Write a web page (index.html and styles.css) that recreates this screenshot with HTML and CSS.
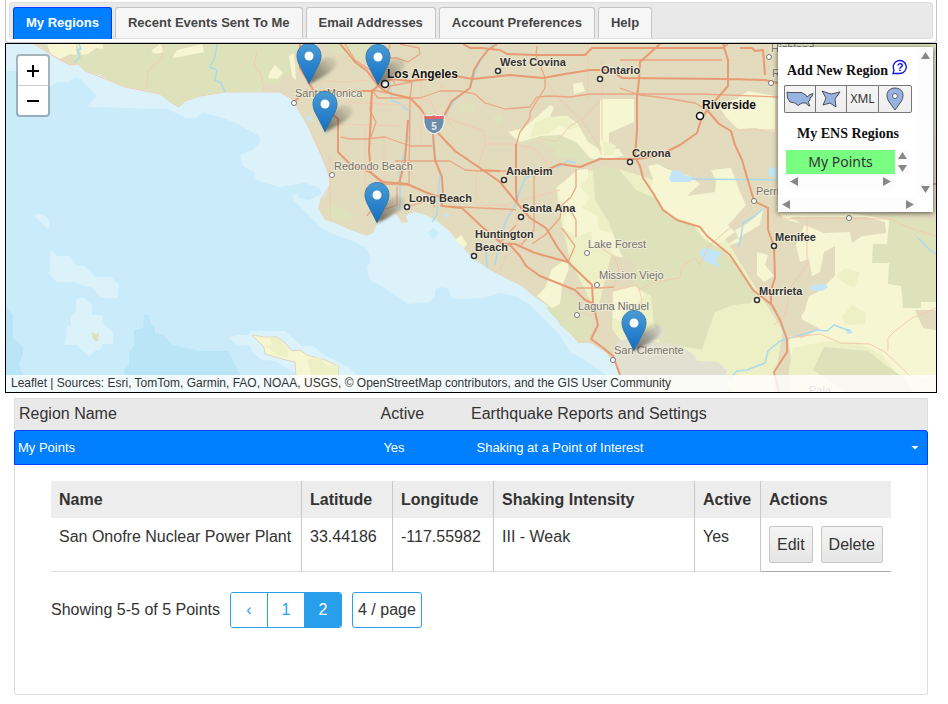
FILE: index.html
```html
<!DOCTYPE html>
<html lang="en">
<head>
<meta charset="utf-8">
<meta name="viewport" content="width=device-width, initial-scale=1">
<title>My Regions</title>
<link rel="stylesheet" href="styles.css">
</head>
<body>
<header class="tabs-frame">
  <nav class="tabs" aria-label="Account sections">
    <a class="tab tab-active" href="#regions">My Regions</a>
    <a class="tab" href="#events">Recent Events Sent To Me</a>
    <a class="tab" href="#emails">Email Addresses</a>
    <a class="tab" href="#preferences">Account Preferences</a>
    <a class="tab" href="#help">Help</a>
  </nav>
</header>

<main id="regions">
<section class="map" aria-label="Map of regions">
  <svg class="map-canvas" viewBox="6 44 930 348" preserveAspectRatio="xMidYMid slice" role="img" aria-label="Southern California">
    <defs>
      <linearGradient id="pinFill" x1="0" y1="0" x2="0" y2="1">
        <stop offset="0" stop-color="#4a9bd3"/><stop offset="1" stop-color="#126fc6"/>
      </linearGradient>
      <linearGradient id="pinEdge" x1="0" y1="0" x2="0" y2="1">
        <stop offset="0" stop-color="#3883b7"/><stop offset="1" stop-color="#2e6c97"/>
      </linearGradient>
      <linearGradient id="pinShadow" x1="0" y1="1" x2="1" y2="0">
        <stop offset="0" stop-color="#222" stop-opacity=".65"/><stop offset="1" stop-color="#222" stop-opacity="0"/>
      </linearGradient>
      <filter id="soft" x="-30%" y="-30%" width="160%" height="160%"><feGaussianBlur stdDeviation="1.6"/></filter>
      <g id="pin">
        <path d="M0 0C2-10 8-25 20-27C29-29 30-20 22-13C15-7 5-2 0 0z" fill="url(#pinShadow)" filter="url(#soft)"/>
        <path d="M0-.5L-9.5-19C-11-22-12-25-12-28C-12-35-7-40.500 0-40.500S12-35 12-28C12-25 11-22 9.500-19z" fill="url(#pinFill)" stroke="url(#pinEdge)"/>
        <circle cx="0" cy="-28" r="4.500" fill="#fff"/>
      </g>
    </defs>

    <rect x="6" y="44" width="930" height="348" fill="#dcf2fb"/>
    <path class="sea" d="M6 71H17L20 78L50 87L58 82L68 82L75 77L82 80L85 84L97 95L87 107L168 109L185 118H195L203 113L223 118L233 122L243 127L259 136L260 142L253 150L240 155L243 166L254 172L256 180L280 187L305 183L313 186V191L293 195V200L310 217L320 227L335 235L350 240L365 247L370 255V262L367 267L368 275L372 282L380 285L395 295L408 304L430 302L435 296V289L443 287L448 289L451 297L455 299L483 298L500 293L515 296L530 305L545 320L560 335L570 352L585 360L607 375L600 392H6z"/>
    <path class="deep" d="M6 307L13 315V338L23 347V355L18 363L23 375L18 392H6zM144 315H149L151 324L155 326V333L163 335L173 345L200 351H228L233 361L240 375V392H128L124 370L129 365V353L134 346V330L143 328z"/>
    <path class="shoal" d="M34 216L37 214H43L50 221L48 229zM51 250L57 256H70L77 266H85L95 277H111L119 285L118 298H101L92 287L84 286L74 282H57L49 274zM76 300L80 298H85L92 305V315H102L104 324L113 332V344H103L100 350L95 351L89 356L77 345H65L67 327L71 325V316L76 312zM292 196L305 191L340 190V235L320 227z"/>
    <path class="sea" d="M428 232L434 228L439 233L433 240zM303 183L319 187L322 193L310 200L298 198z"/>
    <path class="shoal" d="M229 338L235 335H248L251 331H285L302 346H313L325 355L350 368L362 380L370 392H300L295 373L275 361L262 360L252 352L250 346L238 345z"/>

    <path fill="#e2dbbd" d="M34 44L42 48L55 57L70 65L78 64L85 71L100 75L113 82L125 87L146 90L160 94L172 103L179 107L185 101L200 96L225 92L262 91L280 92L292 99L300 112L307 124L315 142L322 157L329 175L330 185L325 196L320 201L318 208L325 220L335 223L348 229L367 236L373 233L378 222L385 220L395 213L402 223L408 222L406 215L415 212L425 215L436 220L450 232L465 250L475 260L490 270L505 278L520 285L535 297L551 308L560 325L570 333L578 343H590L605 352L615 364L622 376L632 392H936V44z"/>
    <path fill="none" stroke="#f3ccb1" d="M34 44L55 57L70 65L78 64L85 71L113 82L125 87L160 94L172 103L179 107L185 101L200 96L225 92L280 92L292 99L307 124L322 157L329 175L330 185L320 201"/>

    <path class="park" d="M70 44L73 59L78 64L85 71L100 75L113 82L125 87L146 90L160 94L172 103L179 107L185 101L200 96L225 92L262 91L266 83L278 84L284 76L299 71L294 54L301 44zM328 44L333 52L345 54L352 62L362 60L367 50L375 44zM323 211L333 204L349 211L354 221L339 221zM780 44H936V130H933V47H780zM460 104L474 103L476 109L467 114L458 110zM493 117L500 114L503 121L496 124z"/>
    <path class="meadow" d="M47 44L51 54L60 59L70 54L77 55L76 44zM77 44L82 55L88 54L96 48L103 49V44zM151 51L160 44L165 52L156 54zM172 58L177 50L202 44L204 52L189 55L179 57zM270 72L275 65L283 73L278 79L268 78zM289 56L294 53L296 80L292 76z"/>
    <path class="park" d="M515 134L523 131L535 120H548L558 128L577 129L592 140L598 145L620 149L615 157L581 164L573 158H558L553 148L540 140L520 143z"/>
    <path class="meadow" d="M508 132L524 128L538 116L550 105L554 107L550 117L567 116L578 124L588 142L602 151L618 149L624 156L600 160L590 158L576 142L560 135L540 136L520 142zM600 99H634V122L609 133V149H620V152L603 154L600 143zM573 84L582 82L585 91L574 94zM724 102L737 99L748 91L775 96V132L755 128L738 129L725 116L720 108z"/>
    <path class="field" d="M535 122L549 117L568 118L578 126L570 130L560 126L548 134L530 137zM603 141L616 145L614 154L604 156zM556 187L578 172L615 168L680 188L720 230L757 290L783 330L773 392H660L590 300L570 260L559 210z"/>
    <path class="meadow" d="M558 187L577 170L588 169V178L580 186L590 198L582 208L597 216L599 230L625 235L628 256L619 258L608 247L593 246L591 231L577 237L562 228L568 208L559 198zM648 166L658 164L667 169L690 176L700 184L687 196L715 192L716 181L711 170L731 168L740 192L746 205L728 225L735 232L716 246L702 236L696 227L676 220L663 207L650 190L653 179zM610 290L635 285L645 295L630 310L635 325L612 318z"/>
    <path class="park" d="M593 170L603 166L618 168L636 190L655 198L667 215L694 226L704 239L722 250L740 268L757 294L750 303L733 305L715 312L705 340L702 350L660 342L654 325L651 296L634 286L635 270L621 254L608 221L595 200zM546 308L557 302L565 292L577 299L583 315L593 318L590 340H578L566 330z"/>
    <path class="meadow" d="M537 296L545 288L552 269L566 259L569 269L562 286L560 304L552 308zM455 240L461 235L467 244L464 248z"/>
    <path fill="#f7f6d3" d="M776 206L793 212L850 213L880 218L936 230V392H795L792 364L788 336L805 310L813 281L809 259L800 262L796 245L805 224L783 219zM731 242L745 234L760 225L764 206L755 217L745 225L735 230L740 242L726 246zM757 252L768 255L765 265L774 276L764 282L757 275z"/>
    <path fill="#e2dbbd" d="M790 217H866L885 222L886 233L862 236L852 243L850 232L824 233L802 224zM788 336L798 307L805 280L820 272L824 252L835 246V276L818 292L795 303L803 320L820 329L802 338zM915 310H936V330L923 328z"/>
    <path class="park" d="M890 213L905 220H936V302H921V308H903L901 286L888 284L889 263H872L873 244H887z"/>
    <path class="field" d="M789 369L793 348L821 342H857L882 355L897 374L936 380V392H789zM835 276L846 268L860 273L855 287L847 285zM842 317L852 305L866 313L865 324L845 325z"/>
    <path fill="#dee2ba" d="M813 370L824 347L868 351L884 364L903 377L914 392H845z"/>
    <path fill="#e2e0d0" d="M612 350L618 341L640 336L654 328L664 326V337L652 341L680 345L695 356L697 361L718 362L727 371L723 380L733 392H631L622 376z"/>
    <path fill="#e2dbbd" d="M611 256L630 258L635 267L634 286L613 292L612 334L602 338L596 312L600 300z"/>
    <path fill="#f7f6d3" stroke="#dcd8bc" d="M252 335L264 337H277L285 343L292 351L300 350L307 355L325 360L338 366L340 392H297L295 362L286 360L265 354L264 347z"/>
    <path class="field" d="M270 338H278L289 350L287 358L276 354L265 346L272 344zM307 359L319 357L327 365H338V375H311z"/>
    <path fill="#dee2ba" d="M92 332L96 334L99 332L98 341H95L92 337z"/>
    <path class="lake" d="M669 178L672 171L678 170L685 175L695 178L690 182L671 182zM699 254L704 247L722 253L716 260L721 268L704 261zM767 170L776 166V178L770 176zM811 285L825 284L828 287L822 291L811 290zM845 329H850L853 333L848 334zM443 213L451 215L447 218zM307 117L312 115L311 122L307 120z"/>
    <path class="river" d="M79 44L81 49L77 50L80 57L75 62M217 44L215 57L210 67L217 70L215 80L221 83L225 92M492 44L482 58L476 70L470 88L456 99L448 110L446 116M390 82L392 101L399 103L410 112L409 135L400 170V211M434 134L433 148L440 175L437 215L432 222M557 168L568 161L576 163M595 161L600 158L605 159M536 173L525 178L515 205L506 221L500 240L495 265M486 250L487 268M692 179L776 180M764 208L755 216L743 223L741 237L738 247M729 379L737 371L747 370L765 363L768 351L780 341L794 337L817 330L827 331L834 325L850 331M917 237L930 250L936 254M781 325L787 340"/>
    <path class="minor" d="M164 44L162 58L148 71L146 90M257 51L254 65L261 74L264 91M300 96L325 81L345 82L370 80M343 60L354 53M325 124L378 125L400 126M330 155V220M345 102L420 106M384 136V205M421 72V143M365 124L365 194M380 92L430 100L437 115L452 120L484 131L485 144H513L535 149L548 164M485 144L476 175V206L505 205L560 190M440 84L450 95L447 120L456 130M545 80L560 100L580 118L594 138L602 155M602 98L584 118L570 126L557 141L540 139M588 44V100M602 60V140M620 60H735M738 130H780M770 209L785 219L820 218L890 219L910 228L936 236M807 220V265L790 288L785 315L774 325M787 338L820 334L840 343L870 344L885 352L910 376M888 351V338L895 331L912 318L936 308M598 246L615 257L619 270L614 287M612 290L638 285L642 300L637 315M638 290L655 282L680 278L682 266L695 258L700 265L708 247L750 210M500 270L505 257L520 246L517 220L505 205"/>
    <path class="road" d="M341 137L350 139H365L385 137L410 146H432M371 137L376 122L370 110L372 92M395 161H450L465 170L480 171H515M384 184L409 185L410 98L412 82L390 86L387 93L372 90L378 98H420L440 91H460L475 94L485 103L505 109L530 107L537 97L550 96L570 97L590 94H700L778 97M384 58L397 58L408 62L420 54L419 48L400 44M345 44L355 60L370 70L375 82M390 44L385 66L395 84M537 46L536 55L541 67L545 78V88L535 104L530 112V118L520 132L516 145V190M516 210L505 209L480 208L440 206M534 175V230L521 245M576 169V187L571 197L562 205L560 218L545 235L532 244M571 211L576 220V237M620 88L640 95L665 98L695 103L707 110M620 60H722M576 288L600 288L614 287M367 216L370 212L380 211L397 205V187M410 206L430 200L435 207M500 243L516 225M568 262L575 246L562 228"/>
    <path class="highway" d="M463 44L470 48H482L500 50L507 54L535 55H585L592 48H722L728 44M740 48H752L755 51L763 50L765 75M293 103L300 96L307 91H372L378 86L392 79L410 81L455 76L473 79L510 75L543 78L565 74L590 70L610 70L622 78L728 79L765 80L778 83M340 44L347 52L355 62L367 71L376 83L383 90L392 94L410 98L420 108L437 132L455 151L480 168L500 182L517 203L530 218L546 228L558 248L570 264L592 285L593 303L598 325L591 339L602 347L613 356L620 375M300 44L300 68L312 88L322 106L338 119V152L350 164L370 172L383 182L407 184L430 194L441 197L442 206L462 208L480 225L500 242L510 245L520 256L526 266L540 276L560 284L575 290L585 300L592 303M433 134L435 160L442 177L443 195M444 116L452 101L470 88L474 70L480 60L488 50L497 44M372 90L371 115L369 150L371 173L384 184M408 120L405 160L399 184M500 243L515 244L535 253L568 262M660 44L640 62L639 80L637 97V130L635 157L640 166L643 178L653 193L663 210L677 220L700 227L707 236L730 255L738 267L753 290L772 305L780 320L787 339V352L774 372L779 392M540 173L560 164L580 167L600 159H635L645 158L660 155L680 145L697 133L701 120L707 110L728 86L728 60L723 44M707 110L719 124L731 131L735 145L742 160L754 201L768 208V230L774 246L775 278L771 290V305M480 170L500 171M516 144V190L517 203M936 184H930"/>

    <g class="town-small">
      <text x="295" y="97">Santa Monica</text><text x="334" y="170">Redondo Beach</text><text x="588" y="248">Lake Forest</text>
      <text x="599" y="279">Mission Viejo</text><text x="578" y="310">Laguna Niguel</text><text x="614" y="354">San Clemente</text>
      <text x="756" y="195">Perris</text><text x="771" y="52">Highland</text><text x="772" y="77">R</text><text x="851" y="212">Hemet</text><text x="809" y="394">Pala</text>
      <circle cx="294" cy="103" r="2.500"/><circle cx="332" cy="175" r="2.500"/><circle cx="587" cy="253" r="2.500"/><circle cx="597" cy="285" r="2.500"/><circle cx="577" cy="315" r="2.500"/><circle cx="613" cy="360" r="2.500"/><circle cx="754" cy="201" r="2.500"/><circle cx="769" cy="57" r="2.500"/><circle cx="771" cy="83" r="2.500"/><circle cx="849" cy="218" r="2.500"/>
    </g>
    <g class="town">
      <text x="500" y="66">West Covina</text><text x="601" y="74">Ontario</text><text x="632" y="157">Corona</text><text x="506" y="175">Anaheim</text>
      <text x="409" y="202">Long Beach</text><text x="522" y="212">Santa Ana</text><text x="475" y="238">Huntington</text><text x="475" y="251">Beach</text><text x="775" y="241">Menifee</text><text x="759" y="295">Murrieta</text>
      <circle cx="498" cy="71" r="2.500"/><circle cx="600" cy="79" r="2.500"/><circle cx="630" cy="162" r="2.500"/><circle cx="504" cy="180" r="2.500"/><circle cx="407" cy="207" r="2.500"/><circle cx="521" cy="217" r="2.500"/><circle cx="474" cy="256" r="2.500"/><circle cx="774" cy="246" r="2.500"/><circle cx="757" cy="300" r="2.500"/>
    </g>
    <g class="city">
      <text x="387" y="78">Los Angeles</text><text x="702" y="109">Riverside</text>
      <circle cx="385" cy="84" r="3.500"/><circle cx="700" cy="116" r="3.500"/>
    </g>
    <g>
      <path d="M424 115Q429 117 434 115Q439 117 444 115Q446 131 434 134Q422 131 424 115z" fill="#6c8daa" stroke="#fff"/>
      <path d="M424.500 115.500Q429 117 434 115.500Q439 117 443.500 115.500V119H424.500z" fill="#e26464"/>
      <text class="shield-number" x="434" y="130">5</text>
    </g>
    <use href="#pin" x="309" y="84"/><use href="#pin" x="378" y="85"/><use href="#pin" x="325" y="132"/><use href="#pin" x="377" y="223"/><use href="#pin" x="634" y="351"/>
  </svg>

  <div class="zoom-control">
    <button type="button" aria-label="Zoom in"><svg viewBox="0 0 12 12"><path d="M6 0V12M0 6H12"/></svg></button>
    <button type="button" aria-label="Zoom out"><svg viewBox="0 0 12 12"><path d="M0 6H12"/></svg></button>
  </div>

  <aside class="region-panel">
    <div class="panel-content">
      <div class="panel-title">
        <h2>Add New Region</h2>
        <a class="help-link" href="#help" aria-label="Help with regions"><svg viewBox="0 0 16 16"><path d="M1 14.500H8A6.500 6.500 0 1 0 2 11z"/><text x="8" y="12">?</text></svg></a>
      </div>
      <div class="tool-group">
        <button type="button" aria-label="Predefined region"><svg width="28" height="16" viewBox="0 0 28 16"><path d="M1 1L3 1.500L16 1.500L18 3L20 4L21 6L24 3.500L27 2.500L26 5.500L24 7L24 9L22 11L24 15L22 14.500L20 12L16 12L12 14.500L9 12L4 11L1.500 7z"/></svg></button>
        <button type="button" aria-label="Draw polygon"><svg width="20" height="18" viewBox="-1 -1 20 18"><path d="M0 0L9 3L18 1L13 8L14 16L8 12L1 14L4 7z"/></svg></button>
        <button type="button">XML</button>
        <button type="button" aria-label="Add point"><svg width="18" height="24" viewBox="0 0 18 24"><path d="M9 23L2.500 14C-1.500 6 3 1 9 1S19.500 6 15.500 14z"/><circle cx="9" cy="9" r="2.500"/></svg></button>
      </div>
      <h2 class="list-title">My ENS Regions</h2>
      <div class="region-list">
        <button type="button" class="region-item">My Points</button>
        <div class="list-rail"><i class="arrow arrow-up"></i><i class="arrow arrow-down"></i></div>
        <div class="list-track"><i class="arrow arrow-left"></i><i class="arrow arrow-right"></i></div>
      </div>
    </div>
    <div class="panel-rail"><i class="arrow arrow-up"></i><i class="arrow arrow-down"></i></div>
    <div class="panel-track"><i class="arrow arrow-left"></i><i class="arrow arrow-right"></i></div>
  </aside>

  <div class="attribution"><a href="#leaflet">Leaflet</a> | Sources: Esri, TomTom, Garmin, FAO, NOAA, USGS, © OpenStreetMap contributors, and the GIS User Community</div>
</section>

<section class="regions">
  <div class="region-grid region-head"><span>Region Name</span><span>Active</span><span>Earthquake Reports and Settings</span></div>
  <button type="button" class="region-grid region-row" aria-expanded="true"><span>My Points</span><span>Yes</span><span>Shaking at a Point of Interest</span><i class="caret"></i></button>
  <div class="region-detail">
    <table>
      <colgroup><col class="col-name"><col class="col-lat"><col class="col-lon"><col class="col-shaking"><col class="col-active"><col></colgroup>
      <thead><tr><th>Name</th><th>Latitude</th><th>Longitude</th><th>Shaking Intensity</th><th>Active</th><th>Actions</th></tr></thead>
      <tbody><tr>
        <td>San Onofre Nuclear Power Plant</td><td>33.44186</td><td>-117.55982</td><td>III - Weak</td><td>Yes</td>
        <td><div class="actions"><button type="button">Edit</button><button type="button">Delete</button></div></td>
      </tr></tbody>
    </table>
    <div class="pager">
      <span>Showing 5-5 of 5 Points</span>
      <div class="pages"><button type="button" aria-label="Previous page">‹</button><button type="button">1</button><button type="button" class="current" aria-current="page">2</button></div>
      <select aria-label="Points per page"><option>4 / page</option></select>
    </div>
  </div>
</section>
</main>
</body>
</html>
```
FILE: styles.css
```css
* { box-sizing: border-box; }

body {
  margin: 0 11px 0 5px;
  background: #fff;
  color: #333;
  font: 16px/24px "Liberation Sans", Arial, sans-serif;
}

button, select { font: inherit; color: inherit; margin: 0; padding: 0; cursor: pointer; }
a { color: inherit; text-decoration: none; }

/* Tabs */
.tabs-frame {
  padding: 2px 3px 3px;
  border: 1px solid #c5c5c5;
  border-top: 0;
  border-radius: 0 0 3px 3px;
}
.tabs {
  display: flex;
  gap: 3px;
  height: 37px;
  padding: 4px 3px 0;
  background: #e9e9e9;
  border: 1px solid #ddd;
  border-radius: 3px;
}
.tab {
  height: 31px;
  padding: 0 12px;
  background: #f6f6f6;
  border: 1px solid #c5c5c5;
  border-bottom: 0;
  border-radius: 3px 3px 0 0;
  color: #454545;
  font-size: 13px;
  font-weight: bold;
  line-height: 30px;
}
.tab-active { height: 32px; background: #007fff; border-color: #003eff; color: #fff; }

/* Map */
.map { position: relative; height: 350px; border: 1px solid #000; overflow: hidden; }
.map-canvas { display: block; width: 100%; height: 100%; font-family: "Liberation Sans", Arial, sans-serif; }
.sea { fill: #c9ebfa; }
.deep { fill: #b9e5f7; }
.shoal { fill: #dcf2fb; }
.park { fill: #dee2ba; }
.meadow { fill: #f7f6d3; }
.field { fill: #edf0c5; }
.lake { fill: #c2e5f8; }
.river, .minor, .road, .highway { fill: none; stroke-linejoin: round; }
.river { stroke: #a9daee; stroke-width: 1.5; }
.minor { stroke: #f4cbb0; }
.road { stroke: #eaa783; stroke-width: 1.3; }
.highway { stroke: #e89a72; stroke-width: 2; }
.town, .town-small { font-size: 11px; }
.town text, .town-small text, .city text { paint-order: stroke; stroke: #f4efdc; stroke-width: 2px; stroke-opacity: .8; }
.town text { font-weight: bold; fill: #333; }
.town-small text { fill: #73736f; }
.city text { font-size: 12px; font-weight: bold; fill: #111; }
.town circle { fill: #fff; stroke: #333; stroke-width: 1.5; }
.town-small circle { fill: #fff; stroke: #777; }
.city circle { fill: #fff; stroke: #111; stroke-width: 1.5; }
.shield-number { font-size: 10px; font-weight: bold; fill: #e4ecf2; text-anchor: middle; }

.zoom-control {
  position: absolute;
  top: 10px;
  left: 10px;
  display: grid;
  border: 2px solid rgba(0, 0, 0, .25);
  border-radius: 4px;
  background: #fff;
  background-clip: padding-box;
}
.zoom-control button { display: grid; place-items: center; width: 30px; height: 29px; background: none; border: 0; }
.zoom-control button:first-child { height: 30px; border-bottom: 1px solid #ccc; }
.zoom-control svg { width: 12px; height: 12px; fill: none; stroke: #000; stroke-width: 2; }

.attribution {
  position: absolute;
  inset: auto 0 0;
  padding: 0 5px;
  background: rgba(255, 255, 255, .8);
  font-size: 12px;
  line-height: 17px;
}

/* Region panel */
.region-panel {
  position: absolute;
  top: 3px;
  right: 3px;
  display: grid;
  grid-template-columns: 140px 15px;
  grid-template-rows: 150px 15px;
  background: #fff;
  box-shadow: 0 1px 5px rgba(0, 0, 0, .65);
}
.panel-content { padding: 15px 6px 0; }
.region-panel h2 { margin: 0; color: #111; font: bold 14px/18px "Liberation Serif", "Times New Roman", serif; }
.panel-title { display: flex; gap: 4px; padding-left: 3px; }
.help-link { height: 16px; margin-top: -3px; }
.help-link svg { display: block; width: 16px; height: 16px; fill: none; stroke: #11e; stroke-width: 1.3; }
.help-link text { fill: #11e; stroke: none; font: bold 11px "Liberation Sans", Arial, sans-serif; text-anchor: middle; }
.tool-group { display: grid; grid-template-columns: 31px 31px 32px 34px; margin-top: 5px; }
.tool-group button {
  display: grid;
  place-items: center;
  height: 28px;
  background: linear-gradient(#f4f4f4, #eee);
  border: 1px solid #777;
  border-right: 0;
  color: #333;
  font: 12px/16px "Noto Sans", sans-serif;
}
.tool-group button:first-child { border-radius: 2px 0 0 2px; }
.tool-group button:last-child { border-right: 1px solid #777; border-radius: 0 2px 2px 0; }
.tool-group path { fill: #97b3e1; stroke: #333; stroke-width: .8; }
.tool-group circle { fill: #fff; stroke: #333; stroke-width: .7; }
.region-panel .list-title { margin-top: 12px; text-align: center; }
.region-list { display: grid; grid-template-columns: 109px 15px; margin: 7px 0 0 2px; }
.region-item { height: 24px; background: #78ff82; border: 0; font: 14px/24px "Noto Sans", sans-serif; }
.list-rail, .list-track, .panel-rail, .panel-track { display: flex; justify-content: space-between; align-items: center; background: #fcfcfc; }
.list-rail, .panel-rail { flex-direction: column; }
.list-rail { padding: 2px 0; }
.list-track { height: 15px; padding: 0 4px; }
.panel-rail { padding: 5px 0 4px; }
.panel-track { padding: 0 4px; }
.arrow { width: 8px; height: 9px; background: #888; }
.arrow-up, .arrow-down { width: 9px; height: 7px; }
.arrow-up { clip-path: polygon(50% 0, 100% 100%, 0 100%); }
.arrow-down { clip-path: polygon(0 0, 100% 0, 50% 100%); }
.arrow-left { clip-path: polygon(0 50%, 100% 0, 100% 100%); }
.arrow-right { clip-path: polygon(0 0, 100% 50%, 0 100%); }

/* Region list */
.regions { margin: 5px 9px 0; }
.region-grid { display: grid; grid-template-columns: 40% 10% 1fr auto; align-items: center; width: 100%; text-align: left; }
.region-head { height: 32px; padding: 0 4px 2px; background: #e9e9e9; border: 1px solid #ddd; border-bottom: 0; }
.region-row {
  height: 35px;
  padding: 0 8px 0 3px;
  background: #007fff;
  border: 1px solid #003eff;
  border-radius: 3px 3px 0 0;
  color: #fff;
  font-size: 13px;
}
.region-row span:nth-child(2) { padding-left: 5px; }
.region-row span:nth-child(3) { padding-left: 8px; }
.caret { width: 8px; height: 4px; background: #fff; clip-path: polygon(0 0, 100% 0, 50% 100%); }
.region-detail { min-height: 230px; padding: 16px 36px; border: 1px solid #ddd; border-top: 0; border-radius: 0 0 3px 3px; }

table { width: 100%; border-collapse: separate; border-spacing: 0; table-layout: fixed; }
.col-name { width: 251px; }
.col-lat { width: 91px; }
.col-lon { width: 101px; }
.col-shaking { width: 201px; }
.col-active { width: 66px; }
th, td { padding: 8px; text-align: left; vertical-align: top; border-right: 1px solid #c8c8c8; line-height: 21px; }
th { background: #ededed; }
td { border-bottom: 1px solid #ddd; }
th:last-child, td:last-child { border-right: 0; }
td:last-child { border-bottom-color: #aaa; }
.actions { display: flex; gap: 8px; }
.actions button { height: 37px; padding: 0 7px; background: linear-gradient(#f4f4f4, #e6e6e6); border: 1px solid #c5c5c5; border-radius: 2px; }

.pager { display: flex; align-items: center; margin-top: 20px; }
.pages { display: flex; margin: 0 10px; border: 1px solid #299eeb; border-radius: 3px; overflow: hidden; }
.pages button { width: 37px; height: 34px; background: #fff; border: 0; border-right: 1px solid #299eeb; color: #299eeb; }
.pages button:last-child { width: 36px; border-right: 0; }
.pages .current { background: #299eeb; color: #fff; }
.pager select { height: 36px; padding: 0 5px; appearance: none; background: #fff; border: 1px solid #299eeb; border-radius: 3px; }
```
